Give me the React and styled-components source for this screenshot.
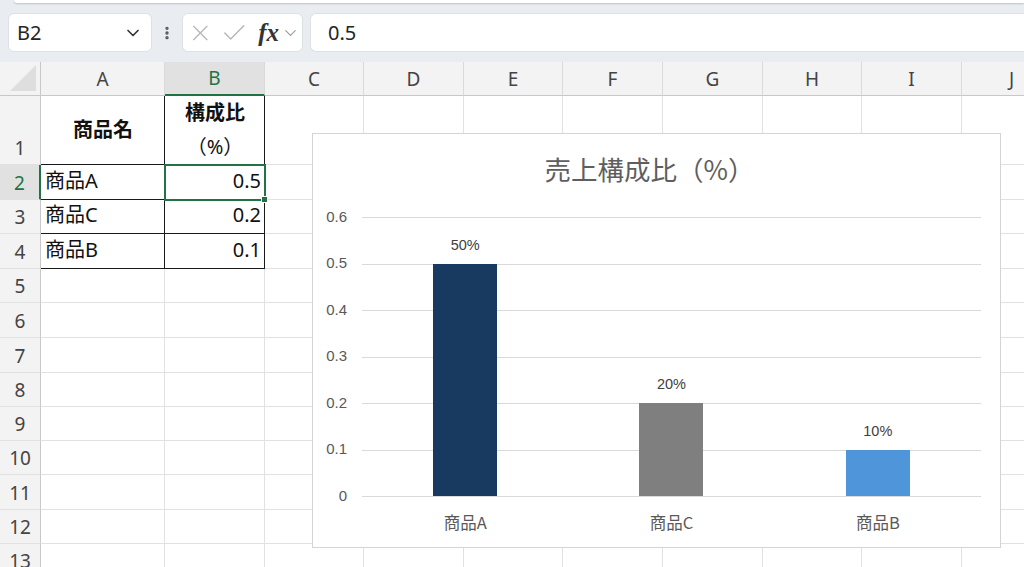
import React from "react";
import styled, { createGlobalStyle } from "styled-components";
import { ChevronDown, EllipsisVertical, X, Check } from "lucide-react";

const GlobalStyle = createGlobalStyle`
  * { box-sizing: border-box; }
  body {
    margin: 0;
    overflow: hidden;
    background: #e9ecf1;
    font-family: "Noto Sans", "Noto Sans CJK JP", sans-serif;
  }
`;

const FONT_CELL = `"Noto Sans", "Noto Sans CJK JP", sans-serif`;
const FONT_CHART = `"Liberation Sans", "Noto Sans CJK JP", sans-serif`;
const GREEN = "#217346";

// 列幅と行高さ（px）
const COLS = [
  ["A", 124],
  ["B", 100],
  ["C", 99],
  ["D", 100],
  ["E", 99],
  ["F", 100],
  ["G", 100],
  ["H", 99],
  ["I", 100],
  ["J", 100],
];
const ROW_HEIGHTS = [69, 35, 34, 35, 34, 35, 35, 34, 34, 34, 35, 34, 34];

const DATA = [
  { name: "商品A", value: 0.5, color: "#193a60" },
  { name: "商品C", value: 0.2, color: "#7f7f7f" },
  { name: "商品B", value: 0.1, color: "#4e95d9" },
];

const Page = styled.div`
  width: 1024px;
  height: 567px;
  display: flex;
  flex-direction: column;
  overflow: hidden;
`;

const RibbonEdge = styled.div`
  height: 3px;
  margin-left: 14px;
  background: #ffffff;
  border-bottom-left-radius: 6px;
  box-shadow: 0 1px 2px rgba(0, 0, 0, 0.18);
`;

const FormulaBar = styled.div`
  display: flex;
  align-items: center;
  height: 59px;
  padding: 10px 0 10px 8px;
  gap: 7px;
`;

const Box = styled.div`
  height: 39px;
  display: flex;
  align-items: center;
  background: #ffffff;
  border: 1px solid #dde0e5;
  border-radius: 6px;
`;

const NameBox = styled(Box)`
  width: 144px;
  padding: 0 8px 0 8px;
  justify-content: space-between;
  font-size: 20px;
  color: #242424;
`;

const Grip = styled.div`
  width: 16px;
  display: flex;
  justify-content: center;
  color: #555;
`;

const FxBox = styled(Box)`
  width: 121px;
  padding: 0 2px 0 4px;
  gap: 6px;
  color: #b7b7b7;
`;

const Fx = styled.span`
  font-family: "Liberation Serif", serif;
  font-style: italic;
  font-weight: bold;
  font-size: 25px;
  color: #333;
  margin-left: 4px;
  margin-right: -4px;
`;

const FormulaInput = styled(Box)`
  flex: 1;
  padding-left: 17px;
  border-right: none;
  border-radius: 6px 0 0 6px;
  font-size: 20px;
  color: #242424;
`;

const SheetWrap = styled.div`
  position: relative;
  flex: 1;
  background: #ffffff;
  overflow: hidden;
`;

const Grid = styled.div`
  display: grid;
  grid-template-columns: 41px ${COLS.map(([, w]) => `${w}px`).join(" ")};
  grid-template-rows: 34px ${ROW_HEIGHTS.map((h) => `${h}px`).join(" ")};
  font-family: ${FONT_CELL};
`;

const Corner = styled.div`
  background: #f3f3f3;
  border-right: 1px solid #c8c8c8;
  border-bottom: 1px solid #c8c8c8;
  position: relative;
  &::after {
    content: "";
    position: absolute;
    right: 4px;
    bottom: 4px;
    width: 26px;
    height: 26px;
    background: #dedede;
    clip-path: polygon(100% 0, 100% 100%, 0 100%);
  }
`;

const ColHead = styled.div`
  display: flex;
  align-items: center;
  justify-content: center;
  font-size: 19px;
  background: ${(p) => (p.$active ? "#e1e1e1" : "#f3f3f3")};
  color: ${(p) => (p.$active ? GREEN : "#444")};
  border-right: 1px solid #dadada;
  border-bottom: ${(p) => (p.$active ? `2px solid ${GREEN}` : "1px solid #c8c8c8")};
`;

const RowHead = styled.div`
  display: flex;
  align-items: flex-end;
  justify-content: center;
  padding-bottom: 3px;
  font-size: 19px;
  background: ${(p) => (p.$active ? "#e1e1e1" : "#f3f3f3")};
  color: ${(p) => (p.$active ? GREEN : "#444")};
  border-right: ${(p) => (p.$active ? `2px solid ${GREEN}` : "1px solid #c8c8c8")};
  border-bottom: 1px solid #e1e1e1;
`;

const Cell = styled.div`
  position: relative;
  display: flex;
  flex-direction: column;
  justify-content: ${(p) => (p.$middle ? "center" : "flex-end")};
  align-items: ${(p) =>
    p.$align === "right" ? "flex-end" : p.$align === "center" ? "center" : "flex-start"};
  padding: ${(p) => (p.$middle ? "0 3px 0 4px" : "0 3px 2px 4px")};
  font-size: 20px;
  line-height: ${(p) => (p.$wrap ? "34px" : "1.6")};
  font-weight: ${(p) => (p.$bold ? 700 : 400)};
  color: #111;
  border-right: 1px solid ${(p) => (p.$boxed ? "#1a1a1a" : "#e1e1e1")};
  border-bottom: 1px solid ${(p) => (p.$boxed ? "#1a1a1a" : "#e1e1e1")};
  outline: ${(p) => (p.$selected ? `2px solid ${GREEN}` : "none")};
  outline-offset: -1px;
  z-index: ${(p) => (p.$selected ? 1 : 0)};
`;

const Light = styled.span`
  font-weight: 400;
`;

const FillHandle = styled.div`
  position: absolute;
  right: -4px;
  bottom: -4px;
  width: 7px;
  height: 7px;
  background: ${GREEN};
  border: 1px solid #ffffff;
`;

/* グラフ */
const Chart = styled.div`
  position: absolute;
  left: 312px;
  top: 71px;
  width: 689px;
  height: 415px;
  background: #ffffff;
  border: 1px solid #d4d4d4;
  display: flex;
  flex-direction: column;
  font-family: ${FONT_CHART};
`;

const ChartTitle = styled.div`
  margin-top: 19px;
  text-align: center;
  font-family: "Noto Sans CJK JP", sans-serif;
  font-size: 26.5px;
  line-height: 32px;
  color: #5e5e5e;
  padding-right: 14px;
`;

const PlotRow = styled.div`
  margin-top: 32px;
  margin-right: 19px;
  display: grid;
  grid-template-columns: 49px 1fr;
  align-items: start;
`;

const Axis = styled.div`
  display: flex;
  flex-direction: column;
  margin: -23.25px 0;
`;

const AxisLabel = styled.div`
  height: 46.5px;
  line-height: 46.5px;
  text-align: right;
  padding-right: 15px;
  font-size: 15px;
  color: #595959;
`;

const Plot = styled.div`
  display: grid;
  height: 280px;
  border-bottom: 1.5px solid #d9d9d9;
  & > * {
    grid-area: 1 / 1;
  }
`;

const GridLines = styled.div`
  display: flex;
  flex-direction: column;
`;

const Band = styled.div`
  height: 46.5px;
  border-top: 1.5px solid #d9d9d9;
`;

const Bars = styled.div`
  display: grid;
  grid-template-columns: repeat(3, 1fr);
`;

const BarSlot = styled.div`
  display: flex;
  flex-direction: column;
  justify-content: flex-end;
  align-items: center;
`;

const DataLabel = styled.div`
  font-size: 14.5px;
  line-height: 18px;
  margin-bottom: 10px;
  color: #404040;
`;

const Bar = styled.div`
  width: 64px;
  background: ${(p) => p.$color};
`;

const Categories = styled.div`
  margin: 15px 19px 0 49px;
  display: grid;
  grid-template-columns: repeat(3, 1fr);
`;

const Category = styled.div`
  text-align: center;
  font-family: "Noto Sans CJK JP", sans-serif;
  font-size: 16.5px;
  line-height: 20px;
  color: #595959;
`;

const PLOT_H = 279;
const MAX = 0.6;

function renderRow(r) {
  const rowNo = r + 1;
  const inTable = rowNo <= 4;
  const cells = COLS.map(([letter]) => {
    const key = `${letter}${rowNo}`;
    const boxed = inTable && (letter === "A" || letter === "B");
    if (rowNo === 1 && letter === "A") {
      return (
        <Cell key={key} $boxed $bold $middle $align="center">
          商品名
        </Cell>
      );
    }
    if (rowNo === 1 && letter === "B") {
      return (
        <Cell key={key} $boxed $bold $middle $wrap $align="center">
          <span>構成比</span>
          <Light>（%）</Light>
        </Cell>
      );
    }
    if (rowNo >= 2 && rowNo <= 4) {
      const d = DATA[rowNo - 2];
      if (letter === "A") {
        return (
          <Cell key={key} $boxed>
            {d.name}
          </Cell>
        );
      }
      if (letter === "B") {
        return (
          <Cell key={key} $boxed $align="right" $selected={rowNo === 2}>
            {d.value}
            {rowNo === 2 && <FillHandle />}
          </Cell>
        );
      }
    }
    return <Cell key={key} $boxed={boxed} />;
  });
  return [
    <RowHead key={`r${rowNo}`} $active={rowNo === 2}>
      {rowNo}
    </RowHead>,
    ...cells,
  ];
}

export default function App() {
  return (
    <Page>
      <GlobalStyle />
      <RibbonEdge />
      <FormulaBar>
        <NameBox>
          <span>B2</span>
          <ChevronDown size={20} color="#333" strokeWidth={2} />
        </NameBox>
        <Grip>
          <EllipsisVertical size={18} strokeWidth={3} />
        </Grip>
        <FxBox>
          <X size={28} strokeWidth={1.2} />
          <Check size={30} strokeWidth={1.2} />
          <Fx>fx</Fx>
          <ChevronDown size={20} color="#9a9a9a" strokeWidth={1.4} />
        </FxBox>
        <FormulaInput>0.5</FormulaInput>
      </FormulaBar>

      <SheetWrap>
        <Grid>
          <Corner />
          {COLS.map(([letter]) => (
            <ColHead key={letter} $active={letter === "B"}>
              {letter}
            </ColHead>
          ))}
          {ROW_HEIGHTS.map((_, r) => renderRow(r))}
        </Grid>

        <Chart>
          <ChartTitle>売上構成比（%）</ChartTitle>
          <PlotRow>
            <Axis>
              {["0.6", "0.5", "0.4", "0.3", "0.2", "0.1", "0"].map((v) => (
                <AxisLabel key={v}>{v}</AxisLabel>
              ))}
            </Axis>
            <Plot>
              <GridLines>
                {[0, 1, 2, 3, 4, 5].map((i) => (
                  <Band key={i} />
                ))}
              </GridLines>
              <Bars>
                {DATA.map((d) => (
                  <BarSlot key={d.name}>
                    <DataLabel>{Math.round(d.value * 100)}%</DataLabel>
                    <Bar
                      $color={d.color}
                      style={{ height: `${(d.value / MAX) * PLOT_H}px` }}
                    />
                  </BarSlot>
                ))}
              </Bars>
            </Plot>
          </PlotRow>
          <Categories>
            {DATA.map((d) => (
              <Category key={d.name}>{d.name}</Category>
            ))}
          </Categories>
        </Chart>
      </SheetWrap>
    </Page>
  );
}
